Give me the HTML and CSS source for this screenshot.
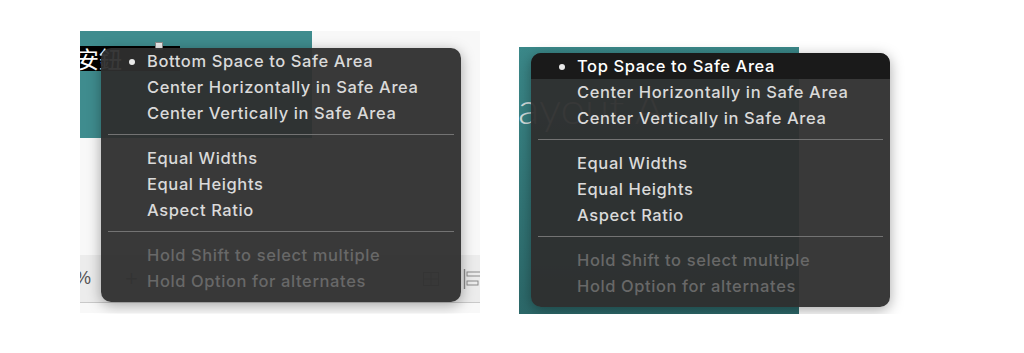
FILE: index.html
```html
<!DOCTYPE html>
<html lang="en">
<head>
    <meta charset="UTF-8">
    <meta name="viewport" content="width=device-width, initial-scale=1.0">
    <title>Safe Area Constraints</title>
    <link rel="stylesheet" href="styles.css">
</head>
<body>
<div class="stage">
    <section class="shot shot-left">
        <div class="canvas">
            <div class="label">安鈕</div>
        </div>
        <span class="handle"></span>
        <div class="toolbar">
            <span class="zoom">%</span>
            <span class="cross">+</span>
            <span class="tools">
                <svg width="18" height="18" viewBox="0 0 18 18">
                    <rect x="1.5" y="2.5" width="15" height="13" fill="none" stroke="#9a9a9a"/>
                    <line x1="1.5" y1="9" x2="16.5" y2="9" stroke="#9a9a9a"/>
                    <line x1="9" y1="2.5" x2="9" y2="15.5" stroke="#9a9a9a"/>
                </svg>
                <svg width="22" height="22" viewBox="0 0 22 22">
                    <line x1="2.5" y1="1" x2="2.5" y2="21" stroke="#8a8a8a" stroke-width="1.4"/>
                    <rect x="5" y="4" width="17" height="4" fill="none" stroke="#8a8a8a"/>
                    <rect x="5" y="13" width="11" height="4" fill="none" stroke="#8a8a8a"/>
                </svg>
            </span>
        </div>
        <ul class="menu">
            <li class="item on">Bottom Space to Safe Area</li>
            <li class="item">Center Horizontally in Safe Area</li>
            <li class="item">Center Vertically in Safe Area</li>
            <li class="sep"></li>
            <li class="item">Equal Widths</li>
            <li class="item">Equal Heights</li>
            <li class="item">Aspect Ratio</li>
            <li class="sep"></li>
            <li class="item off">Hold Shift to select multiple</li>
            <li class="item off">Hold Option for alternates</li>
        </ul>
    </section>

    <section class="shot shot-right">
        <div class="canvas-dark">
            <span class="ghost">ayout A</span>
        </div>
        <ul class="menu">
            <li class="item on hl">Top Space to Safe Area</li>
            <li class="item">Center Horizontally in Safe Area</li>
            <li class="item">Center Vertically in Safe Area</li>
            <li class="sep"></li>
            <li class="item">Equal Widths</li>
            <li class="item">Equal Heights</li>
            <li class="item">Aspect Ratio</li>
            <li class="sep"></li>
            <li class="item off">Hold Shift to select multiple</li>
            <li class="item off">Hold Option for alternates</li>
        </ul>
    </section>
</div>
</body>
</html>
```

FILE: styles.css
```css
body { margin: 0; background: #fff; font-family: Inter, "Liberation Sans", sans-serif; }
.stage { display: flex; align-items: flex-start; padding: 31px 0 0 80px; }

.shot { position: relative; }
.shot-left { width: 400px; height: 282px; background: #f8f8f8; }
.shot-right { width: 280px; height: 267px; margin: 16px 0 0 39px; }

/* left screenshot */
.canvas { width: 232px; height: 107px; padding-top: 15px; box-sizing: border-box; background: #3f8c8e; }
.label { width: 100px; height: 25px; background: #000; color: #fff; font: 23px/25px "Noto Sans CJK TC", sans-serif; text-indent: -4px; overflow: hidden; white-space: nowrap; }
.handle { position: absolute; left: 75px; top: 11px; width: 6px; height: 6px; background: #eee; border: 1px solid #8a8a8a; }
.toolbar { display: flex; align-items: center; height: 47px; margin-top: 117px; background: #ececec; border-bottom: 1px solid #c9c9c9; overflow: hidden; }
.zoom { margin-left: -5px; font: 18px "Liberation Sans", sans-serif; color: #555; }
.cross { margin-left: 34px; font: 22px "Liberation Sans", sans-serif; color: #8a8a8a; }
.tools { margin-left: auto; display: flex; align-items: center; gap: 22px; margin-right: -4px; }

/* right screenshot */
.canvas-dark { height: 100%; overflow: hidden; background: linear-gradient(#3b8889, #2c6869); }
.ghost { display: block; margin-top: 34px; margin-left: -1px; font: 300 44px/1.2 Lato, sans-serif; color: #d0dcdc; white-space: nowrap; }

/* popup menu */
.menu { position: absolute; left: 21px; top: 17px; width: 360px; margin: 0; padding: 0 0 8px; list-style: none; background: rgba(46, 46, 46, 0.95); border-radius: 10px; box-shadow: 0 3px 14px rgba(0, 0, 0, 0.35); overflow: hidden; }
.shot-right .menu { left: 12px; top: 6px; width: 359px; }
.item { height: 26px; line-height: 26px; padding-left: 46px; font-size: 16.5px; font-weight: 500; letter-spacing: 0.6px; color: #dadada; white-space: nowrap; }
.item.on::before { content: ""; display: inline-block; width: 6px; height: 6px; margin: 0 12px 0 -18px; border-radius: 50%; background: #e8e8e8; vertical-align: middle; position: relative; top: -1px; }
.item.hl { background: #1a1a1a; color: #fff; }
.item.off { color: #686868; }
.sep { height: 1px; margin: 8px 7px 10px; background: #737373; }
```
